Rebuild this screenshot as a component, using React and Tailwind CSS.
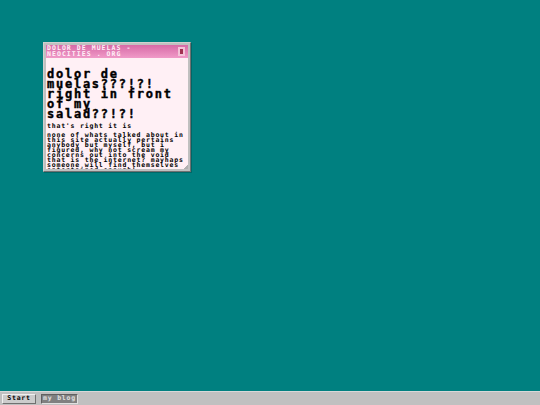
export default function App() {
  return (
    <div className="w-[540px] h-[405px] flex flex-col bg-[#008080] overflow-hidden font-['DejaVu_Sans_Mono',monospace] text-black">
      <div className="relative flex-1">
        <div className="absolute left-[43px] top-[42px] w-[148px] h-[130px] flex flex-col bg-[#c0c0c0] p-[2px] border border-t-[#d0d0d0] border-l-[#d0d0d0] border-r-[#707070] border-b-[#707070] shadow-[1px_1px_0_#006868]">
          <div className="h-[13px] shrink-0 flex items-center justify-between pl-[1px] pr-[3px] bg-gradient-to-b from-[#d66aa6] to-[#f09ac8]">
            <div className="text-[6.5px] leading-[5.5px] tracking-[1.05px] font-bold text-[#fff0f8] whitespace-pre">
              {'DOLOR DE MUELAS -\nNEOCITIES . ORG'}
            </div>
            <div className="w-[7px] h-[9px] flex items-center justify-center bg-[#f3c3d8]">
              <div className="w-[3px] h-[5px] bg-[#a03050]" />
            </div>
          </div>
          <div className="relative flex-1 overflow-hidden bg-[#fff0f5] pl-[1px] pt-[11px]">
            <h1 className="text-[12px] leading-[10px] tracking-[1.75px] font-bold w-[130px] [-webkit-text-stroke:0.4px_black]">
              dolor de muelas???!?! right in front of my salad??!?!
            </h1>
            <p className="mt-[4px] text-[6.5px] leading-[7px] tracking-[0.8px] font-bold">that's right it is</p>
            <p className="mt-[3px] text-[6.5px] leading-[5px] tracking-[0.8px] font-bold w-[142px]">
              none of whats talked about in this site actually pertains anybody but myself, but i figured, why not scream my concerns out into the void that is the internet? mayhaps someone will find themselves entertained enough!
            </p>
            <div className="absolute right-0 bottom-0 w-[5px] h-[5px] bg-gradient-to-br from-transparent from-50% to-[#b0b0b0] to-50%" />
          </div>
        </div>
      </div>
      <div className="h-[14px] shrink-0 flex items-center gap-[5px] pl-[2px] bg-[#c0c0c0] border-t border-[#d8d8d8]">
        <div className="w-[34px] h-[10px] flex items-center justify-center bg-[#cccccc] border border-t-[#f0f0f0] border-l-[#f0f0f0] border-r-[#707070] border-b-[#707070] text-[6.5px] tracking-[0.8px] font-bold leading-none">
          Start
        </div>
        <div className="w-[37px] h-[10px] flex items-center justify-center bg-[#808080] border border-t-[#606060] border-l-[#606060] border-r-[#e0e0e0] border-b-[#e0e0e0] text-[6.5px] tracking-[0.8px] font-bold leading-none text-[#e0e0e0]">
          my blog
        </div>
      </div>
    </div>
  )
}
